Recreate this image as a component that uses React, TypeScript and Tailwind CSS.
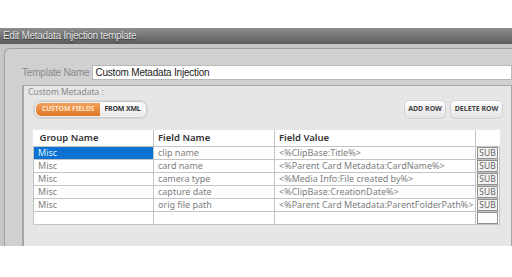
import React from 'react';

const ROWS = [
  { group: 'Misc', field: 'clip name', value: '<%ClipBase:Title%>' },
  { group: 'Misc', field: 'card name', value: '<%Parent Card Metadata:CardName%>' },
  { group: 'Misc', field: 'camera type', value: '<%Media Info:File created by%>' },
  { group: 'Misc', field: 'capture date', value: '<%ClipBase:CreationDate%>' },
  { group: 'Misc', field: 'orig file path', value: '<%Parent Card Metadata:ParentFolderPath%>' },
];

const cell = 'border border-[#c4c4c4] px-[4px] h-[13px] leading-[12px] whitespace-nowrap overflow-hidden';

const App: React.FC = () => {
  return (
    <div className="w-[512px] h-[277px] bg-white overflow-hidden font-['Noto_Sans',sans-serif]">
      <div className="h-[28px]" />

      {/* title bar */}
      <div className="h-[16px] bg-gradient-to-b from-[#8e8e8e] to-[#5c5c5c] pl-[3px] flex items-center">
        <span className="text-[10px] tracking-[-0.3px] leading-none text-[#e4e4e4] font-['Liberation_Sans',sans-serif] [text-shadow:0_1px_1px_#333]">
          Edit Metadata Injection template
        </span>
      </div>

      <div className="h-[202px] bg-[#c6c6c6] pl-[4px] pt-[4px]">
        <div className="h-full bg-[#d0d0d0] border-l border-t border-[#9e9e9e] rounded-tl-[6px] pl-[17px] pt-[16px] flex flex-col">
          <div className="flex items-center h-[15px] font-['Liberation_Sans',sans-serif]">
            <span className="shrink-0 mr-[3px] text-[10px] tracking-[-0.2px] text-[#8a8a8a] whitespace-nowrap">Template Name</span>
            <div className="flex-1 h-[15px] bg-white border border-[#b8b8b8] px-[2px] text-[10px] leading-[13px] text-[#222] whitespace-nowrap tracking-[-0.2px]">
              Custom Metadata Injection
            </div>
          </div>

          <div className="mt-[5px] flex-1 bg-[#e6e6e6] border-l-2 border-t border-r border-[#a6a6a6] pl-[9px] pr-[8px]">
            <div className="text-[8.5px] leading-[10px] text-[#8a8a8a] mt-[1px] -ml-[5px]">Custom Metadata :</div>

            <div className="flex items-center justify-between mt-[3px]">
              <div className="flex h-[19px] rounded-[7px] border border-[#d8d8d8] bg-[#f4f4f4] p-[2px] shadow-[inset_0_0_0_1px_#c9c9c9]">
                <div className="w-[64px] rounded-l-[5px] bg-gradient-to-b from-[#f3a05a] to-[#e0761f] text-[7px] font-bold text-[#fde3c9] flex items-center justify-center tracking-tight">
                  CUSTOM FIELDS
                </div>
                <div className="w-[45px] rounded-r-[5px] bg-gradient-to-b from-white to-[#e9e9e9] text-[7px] font-bold text-[#333] flex items-center justify-center tracking-tight">
                  FROM XML
                </div>
              </div>
              <div className="flex gap-[4px]">
                <button className="h-[19px] w-[42px] rounded-[5px] border border-[#cfcfcf] bg-gradient-to-b from-white to-[#e4e4e4] text-[7px] font-bold text-[#444] shadow-[0_0_0_1px_#eaeaea]">
                  ADD ROW
                </button>
                <button className="h-[19px] w-[53px] rounded-[5px] border border-[#cfcfcf] bg-gradient-to-b from-white to-[#e4e4e4] text-[7px] font-bold text-[#444] shadow-[0_0_0_1px_#eaeaea]">
                  DELETE ROW
                </button>
              </div>
            </div>

            <table className="mt-[11px] bg-white border-collapse text-[9px] text-[#7e7e7e] w-[466px] table-fixed">
              <colgroup>
                <col className="w-[120px]" />
                <col className="w-[121px]" />
                <col className="w-[201px]" />
                <col className="w-[24px]" />
              </colgroup>
              <thead>
                <tr>
                  <th className="border-b border-r border-[#c4c4c4] h-[16px] text-left font-semibold text-[#333] px-[6px] text-[9.5px]">Group Name</th>
                  <th className="border-b border-r border-[#c4c4c4] text-left font-semibold text-[#333] px-[4px] text-[9.5px]">Field Name</th>
                  <th className="border-b border-r border-[#c4c4c4] text-left font-semibold text-[#333] px-[4px] text-[9.5px]">Field Value</th>
                  <th className="border-b border-[#c4c4c4]" />
                </tr>
              </thead>
              <tbody>
                {ROWS.map((r, i) => (
                  <tr key={i}>
                    <td className={`${cell} ${i === 0 ? 'bg-[#0b72d4] text-[#dfeeff]' : ''}`}>{r.group}</td>
                    <td className={cell}>{r.field}</td>
                    <td className={`${cell} px-[2px]`}>{r.value}</td>
                    <td className="border border-[#c4c4c4] p-0 pl-[1px]">
                      <div className="h-[12px] w-[21px] border border-[#8e8e8e] bg-[#f2f2f2] text-[8.5px] leading-[10px] text-center text-[#666]">SUB</div>
                    </td>
                  </tr>
                ))}
                <tr>
                  <td className={cell} />
                  <td className={cell} />
                  <td className={cell} />
                  <td className="border border-[#c4c4c4] p-0 pl-[1px]">
                    <div className="h-[12px] w-[21px] border border-[#8e8e8e] bg-white" />
                  </td>
                </tr>
              </tbody>
            </table>
          </div>
        </div>
      </div>
    </div>
  );
};

export default App;
